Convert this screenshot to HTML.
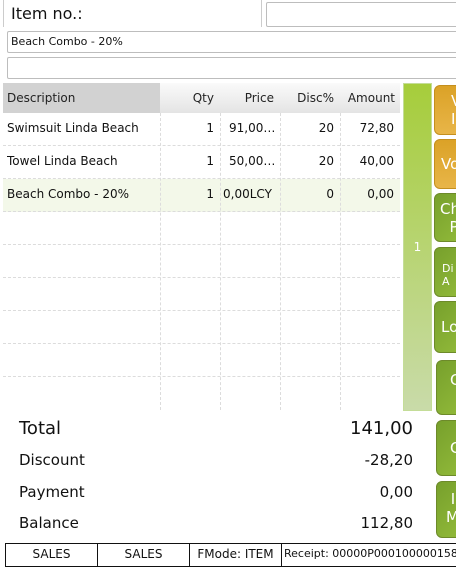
<!DOCTYPE html>
<html><head><style>
*{margin:0;padding:0;box-sizing:border-box}
body{width:456px;height:561px;overflow:hidden;background:#fff;font-family:"DejaVu Sans","Liberation Sans",sans-serif;position:relative;color:#111}
.a{position:absolute}
.inp{position:absolute;border:1px solid #bdbdbd;border-radius:2px;background:#fff}
.hd{position:absolute;top:83px;height:30px;font-size:12px;line-height:30px;color:#222;background:linear-gradient(#fafafa,#e4e4e4);text-align:right;padding-right:6px}
.c{position:absolute;font-size:12px;line-height:33px;height:33px;white-space:nowrap;overflow:hidden}
.r{text-align:right;padding-right:6px}
.hl{position:absolute;left:3px;width:397px;border-top:1px dashed #dcdcdc}
.vl{position:absolute;top:113px;height:297px;border-left:1px dashed #dcdcdc}
.btn{position:absolute;left:434px;width:60px;border-radius:6px;color:#fff;font-size:15px;overflow:hidden;text-align:left;line-height:18px;white-space:pre}
.o{background:linear-gradient(#dba227,#e8b548);border:1px solid #c48f1e}
.g{background:linear-gradient(135deg,#77a02c,#9cc43f);border:1px solid #6d8a2a}
.t{position:absolute;left:19px;font-size:15px}
.tv{position:absolute;right:43px;font-size:15px;text-align:right}
.sb{position:absolute;top:543px;height:24px;border:1px solid #111;font-size:12px;text-align:center;line-height:20px;white-space:nowrap;overflow:hidden}
</style></head><body>
<div class="a" style="left:3px;top:0;width:259px;height:27px;border-right:1px solid #ccc;border-left:1px solid #ccc;font-size:16px;line-height:27px;padding-left:7px">Item no.:</div>
<div class="inp" style="left:266px;top:2px;width:200px;height:25px"></div>
<div class="inp" style="left:7px;top:31px;width:460px;height:22px;font-size:11px;line-height:20px;padding-left:3px">Beach Combo - 20%</div>
<div class="inp" style="left:7px;top:57px;width:460px;height:22px"></div>

<div class="hd" style="left:3px;width:157px;background:#d2d2d2;text-align:left;padding-left:4px">Description</div>
<div class="hd" style="left:160px;width:60px">Qty</div>
<div class="hd" style="left:220px;width:60px">Price</div>
<div class="hd" style="left:280px;width:60px">Disc%</div>
<div class="hd" style="left:340px;width:60px;padding-right:5px">Amount</div>

<div class="a" style="left:3px;top:179px;width:397px;height:33px;background:#f3f8e9"></div>
<div class="hl" style="top:145px"></div><div class="hl" style="top:178px"></div><div class="hl" style="top:211px"></div>
<div class="hl" style="top:244px"></div><div class="hl" style="top:277px"></div><div class="hl" style="top:310px"></div>
<div class="hl" style="top:343px"></div><div class="hl" style="top:376px"></div>
<div class="vl" style="left:160px"></div><div class="vl" style="left:220px"></div><div class="vl" style="left:280px"></div><div class="vl" style="left:340px"></div>

<div class="c" style="left:7px;top:112px">Swimsuit Linda Beach</div>
<div class="c r" style="left:160px;top:112px;width:60px">1</div>
<div class="c" style="left:229px;top:112px;width:51px">91,00…</div>
<div class="c r" style="left:280px;top:112px;width:60px">20</div>
<div class="c r" style="left:340px;top:112px;width:60px">72,80</div>

<div class="c" style="left:7px;top:145px">Towel Linda Beach</div>
<div class="c r" style="left:160px;top:145px;width:60px">1</div>
<div class="c" style="left:229px;top:145px;width:51px">50,00…</div>
<div class="c r" style="left:280px;top:145px;width:60px">20</div>
<div class="c r" style="left:340px;top:145px;width:60px">40,00</div>

<div class="c" style="left:7px;top:178px">Beach Combo - 20%</div>
<div class="c r" style="left:160px;top:178px;width:60px">1</div>
<div class="c" style="left:223px;top:178px;width:57px">0,00LCY</div>
<div class="c r" style="left:280px;top:178px;width:60px">0</div>
<div class="c r" style="left:340px;top:178px;width:60px">0,00</div>

<div class="a" style="left:403px;top:83px;width:29px;height:328px;background:linear-gradient(#a6cd3b,#c9dba9);border:1px solid #c4dd98;color:#fff;font-size:12px;text-align:center;padding-top:156px">1</div>

<div class="btn o" style="top:85px;height:50px;padding-top:6px;padding-left:16px">V
I</div>
<div class="btn o" style="top:139px;height:50px;padding-top:15px;padding-left:6px">Vo</div>
<div class="btn g" style="top:193px;height:49px;padding-top:6px;padding-left:5px">Ch
  P</div>
<div class="btn g" style="top:247px;height:50px;padding-top:14px;padding-left:7px;font-size:11px;line-height:13px">Di
A</div>
<div class="btn g" style="top:301px;height:52px;padding-top:16px;padding-left:6px">Lo</div>
<div class="btn g" style="top:360px;height:55px;left:436px;padding-top:10px;padding-left:13px">C</div>
<div class="btn g" style="top:420px;height:56px;left:436px;padding-top:18px;padding-left:13px">C</div>
<div class="btn g" style="top:481px;height:57px;left:436px;padding-top:8px;padding-left:9px"> I
M</div>

<div class="t" style="top:418px;font-size:18px">Total</div><div class="tv" style="top:418px;font-size:18px">141,00</div>
<div class="t" style="top:451px">Discount</div><div class="tv" style="top:451px">-28,20</div>
<div class="t" style="top:483px">Payment</div><div class="tv" style="top:483px">0,00</div>
<div class="t" style="top:514px">Balance</div><div class="tv" style="top:514px">112,80</div>

<div class="sb" style="left:5px;width:93px">SALES</div>
<div class="sb" style="left:97px;width:93px">SALES</div>
<div class="sb" style="left:189px;width:93px">FMode: ITEM</div>
<div class="sb" style="left:281px;width:190px;text-align:left;padding-left:2px;font-size:11px">Receipt: 00000P0001000001584</div>
</body></html>
